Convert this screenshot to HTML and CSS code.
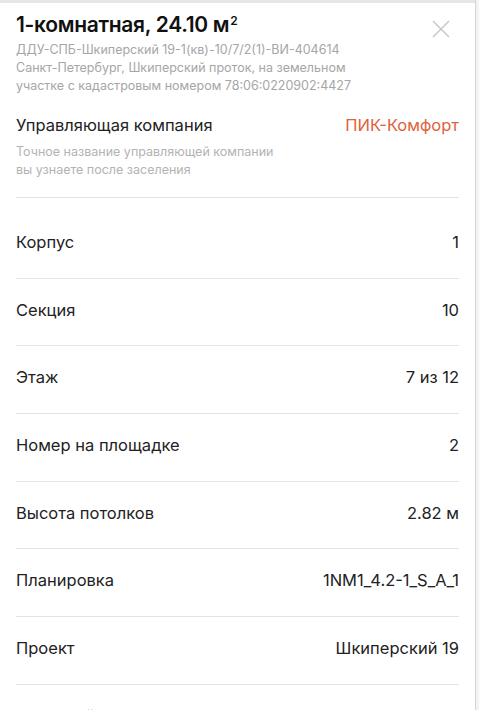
FILE: index.html
```html
<!DOCTYPE html>
<html lang="ru">
<head>
<meta charset="utf-8">
<title>1-комнатная</title>
<link rel="stylesheet" href="styles.css">
</head>
<body>
<div class="frame">
  <div class="sheet">
    <div class="topbar"></div>
    <div class="content">
      <header class="head">
        <div class="head-text">
          <h1 class="title">1-комнатная, 24.10 м<sup class="sq">2</sup></h1>
          <p class="sub">ДДУ-СПБ-Шкиперский 19-1(кв)-10/7/2(1)-ВИ-404614<br>Санкт-Петербург, Шкиперский проток, на земельном<br>участке с кадастровым номером 78:06:0220902:4427</p>
        </div>
        <button class="close" aria-label="Закрыть">
          <svg width="18" height="18" viewBox="0 0 18 18"><path d="M1 1L17 17M17 1L1 17" stroke="#c9c9c9" stroke-width="1.6" fill="none"/></svg>
        </button>
      </header>
      <section class="company">
        <div class="company-row">
          <span class="label">Управляющая компания</span>
          <span class="accent">ПИК-Комфорт</span>
        </div>
        <p class="hint">Точное название управляющей компании<br>вы узнаете после заселения</p>
      </section>
      <ul class="props">
        <li class="prop"><span class="label">Корпус</span><span class="value">1</span></li>
        <li class="prop"><span class="label">Секция</span><span class="value">10</span></li>
        <li class="prop"><span class="label">Этаж</span><span class="value">7 из 12</span></li>
        <li class="prop"><span class="label">Номер на площадке</span><span class="value">2</span></li>
        <li class="prop"><span class="label">Высота потолков</span><span class="value">2.82 м</span></li>
        <li class="prop"><span class="label">Планировка</span><span class="value">1NM1_4.2-1_S_A_1</span></li>
        <li class="prop"><span class="label">Проект</span><span class="value">Шкиперский 19</span></li>
        <li class="prop"><span class="label">Условный номер</span><span class="value">795</span></li>
      </ul>
    </div>
  </div>
  <div class="scrollbar"></div>
</div>
</body>
</html>
```
FILE: styles.css
```css
html, body {
  margin: 0;
  padding: 0;
  background: #ffffff;
  height: 100%;
  overflow: hidden;
}
body {
  font-family: Inter, "Noto Sans", "Liberation Sans", sans-serif;
  color: #222222;
}
.frame {
  display: flex;
  height: 710px;
  overflow: hidden;
}
.sheet {
  flex: 1;
  min-width: 0;
  display: flex;
  flex-direction: column;
}
.topbar {
  height: 3px;
  background: #e6e6e6;
  flex: none;
}
.scrollbar {
  width: 3px;
  flex: none;
  border-left: 1px solid #d4d4d4;
  background: #f3f3f3;
}
.content {
  padding: 0 16px 0 16px;
}
.head {
  display: flex;
  justify-content: space-between;
  align-items: flex-start;
}
.title {
  margin: 8px 0 0 0;
  font-size: 21px;
  font-weight: 600;
  line-height: 28px;
  letter-spacing: -0.3px;
  color: #111111;
}
.sq {
  font-size: 12px;
  line-height: 0;
  vertical-align: 7px;
  margin-left: 1px;
}
.sub {
  margin: 2px 0 0 0;
  font-size: 12.5px;
  line-height: 18px;
  color: #a6a6a6;
}
.close {
  border: 0;
  background: none;
  padding: 0;
  margin: 17px 9px 0 0;
  width: 18px;
  height: 18px;
  cursor: pointer;
}
.close svg { display: block; }
.company {
  margin-top: 20px;
  padding-bottom: 18px;
  border-bottom: 1px solid #e3e3e3;
}
.company-row {
  display: flex;
  justify-content: space-between;
  align-items: baseline;
}
.label {
  font-size: 16.5px;
  line-height: 20px;
  color: #222222;
}
.accent {
  font-size: 16.5px;
  line-height: 20px;
  color: #e0623b;
}
.hint {
  margin: 8px 0 0 0;
  font-size: 12.5px;
  line-height: 18px;
  color: #b3b3b3;
}
.props {
  list-style: none;
  margin: 0;
  padding: 13px 0 0 0;
}
.prop {
  display: flex;
  justify-content: space-between;
  align-items: center;
  padding: 21px 0 25.7px 0;
  border-bottom: 1px solid #e3e3e3;
}
.value {
  font-size: 16.5px;
  line-height: 20px;
  color: #222222;
}
```
